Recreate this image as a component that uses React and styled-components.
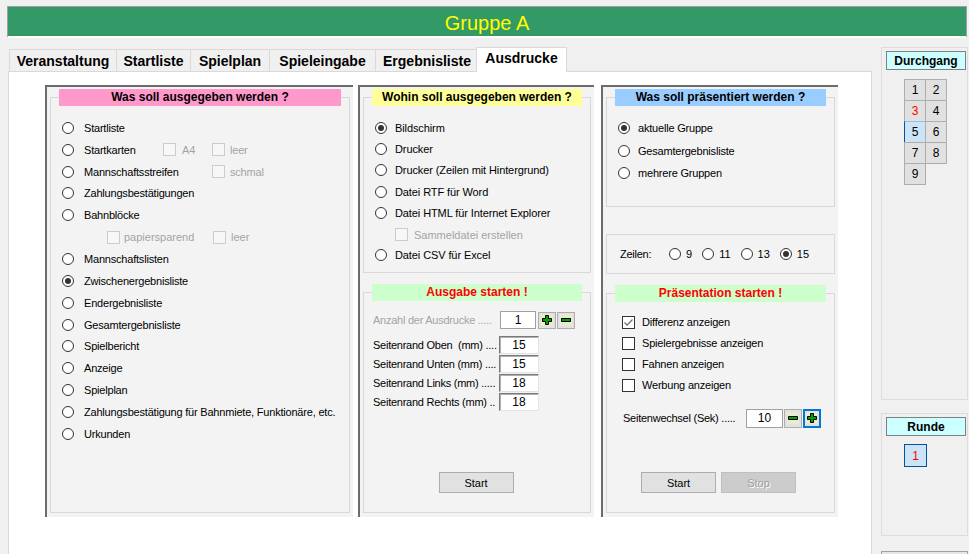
import React from "react";
import styled, { createGlobalStyle } from "styled-components";

const GlobalStyle = createGlobalStyle`
  html, body {
    margin: 0;
    padding: 0;
    background: #f0f0f0;
    overflow: hidden;
  }
  body {
    font-family: "Liberation Sans", Arial, sans-serif;
    color: #000;
  }
  * {
    box-sizing: border-box;
  }
`;

const Screen = styled.div`
  width: 969px;
  height: 554px;
  padding: 6px 0 0 7px;
  overflow: hidden;
`;

const TitleBar = styled.div`
  width: 960px;
  height: 32px;
  background: #339966;
  border: 1px solid #a0a0a0;
  border-bottom: 2px solid #fff;
  display: flex;
  align-items: center;
  justify-content: center;
  color: #ffff00;
  font-size: 20px;
  padding-top: 3px;
`;

const Body = styled.div`
  display: flex;
  align-items: flex-start;
  margin-top: 9px;
`;

const TabArea = styled.div`
  width: 865px;
`;

const TabStrip = styled.div`
  display: flex;
  align-items: flex-end;
  height: 24px;
  margin-left: 2px;
  position: relative;
  z-index: 1;
`;

const Tab = styled.div`
  width: ${(p) => p.$w}px;
  height: ${(p) => (p.$active ? 25 : 22)}px;
  margin: 0 0 ${(p) => (p.$active ? -1 : 0)}px
    ${(p) => (p.$active ? -3 : -1)}px;
  padding-bottom: ${(p) => (p.$active ? 4 : 0)}px;
  border: 1px solid #d9d9d9;
  border-bottom: none;
  background: ${(p) => (p.$active ? "#fff" : "#f0f0f0")};
  font-size: 14px;
  font-weight: bold;
  display: flex;
  align-items: center;
  justify-content: center;
  white-space: nowrap;
  position: relative;
  z-index: ${(p) => (p.$active ? 2 : 1)};
  &:first-child {
    margin-left: 0;
  }
`;

const Page = styled.div`
  margin-left: 1px;
  height: 490px;
  background: #fff;
  border: 1px solid #d9d9d9;
  padding: 13px 0 0 36px;
  display: flex;
  align-items: flex-start;
`;

const Panel = styled.div`
  width: ${(p) => p.$w}px;
  height: 432px;
  margin-right: ${(p) => p.$gap || 0}px;
  background: #f3f3f3;
  border-top: 2px solid #6b6b6b;
  border-left: 2px solid #6b6b6b;
  padding: 2px 3px 4px 3px;
  display: flex;
  flex-direction: column;
  font-size: 11px;
`;

const Group = styled.div`
  margin-top: ${(p) => p.$top}px;
  border: 1px solid #d8d8d8;
  display: flex;
  flex-direction: column;
  ${(p) => (p.$h ? `height: ${p.$h}px;` : "flex: 1;")}
`;

const GroupTitle = styled.div`
  margin: -9px 8px 0;
  height: 17px;
  line-height: 17px;
  background: ${(p) => p.$bg};
  color: ${(p) => p.$color || "#000"};
  font-size: 12px;
  font-weight: bold;
  text-align: center;
`;

const List = styled.div`
  display: flex;
  flex-direction: column;
  padding: ${(p) => p.$pad || "11px 0 0 11px"};
`;

const Row = styled.div`
  display: flex;
  align-items: center;
  height: ${(p) => p.$h}px;
  gap: ${(p) => p.$gap || 8}px;
  letter-spacing: ${(p) => p.$ls || 0}px;
  white-space: nowrap;
`;

const OptRow = styled.div`
  display: grid;
  grid-template-columns: 22px 79px 49px auto;
  align-items: center;
  height: ${(p) => p.$h}px;
  letter-spacing: -0.2px;
  white-space: nowrap;
`;

const SubRow = styled.div`
  display: grid;
  grid-template-columns: ${(p) => p.$cols};
  align-items: center;
  height: ${(p) => p.$h}px;
  padding-left: ${(p) => p.$indent}px;
  white-space: nowrap;
`;

const Span = styled.span`
  grid-column: ${(p) => p.$col};
`;

const RadioDot = styled.span`
  width: 12px;
  height: 12px;
  flex: none;
  border-radius: 50%;
  border: 1px solid #333;
  background: #fff;
  display: flex;
  align-items: center;
  justify-content: center;
  &::after {
    content: "";
    width: 6px;
    height: 6px;
    border-radius: 50%;
    background: ${(p) => (p.$on ? "#333" : "transparent")};
  }
`;

const Box = styled.span`
  width: 13px;
  height: 13px;
  flex: none;
  border: 1px solid ${(p) => (p.$off ? "#cccccc" : "#333")};
  background: ${(p) => (p.$off ? "#f7f7f7" : "#fff")};
  display: flex;
  align-items: center;
  justify-content: center;
`;

const CheckOpt = styled.span`
  display: flex;
  align-items: center;
  gap: ${(p) => p.$gap || 5}px;
  color: ${(p) => (p.$off ? "#a3a3a3" : "#000")};
`;

const FieldRow = styled.div`
  display: flex;
  align-items: center;
  height: ${(p) => p.$h}px;
  margin-top: ${(p) => p.$top || 0}px;
  white-space: nowrap;
`;

const FieldLabel = styled.span`
  width: ${(p) => p.$w}px;
  margin-left: ${(p) => p.$ml || 0}px;
  color: ${(p) => (p.$off ? "#a3a3a3" : "#000")};
  letter-spacing: -0.25px;
  white-space: pre;
  overflow: hidden;
  flex: none;
`;

const NumBox = styled.div`
  width: ${(p) => p.$w}px;
  height: ${(p) => p.$h || 18}px;
  background: #fff;
  border: 1px solid;
  border-color: ${(p) =>
    p.$flat ? "#a0a0a0" : "#7a7a7a #e3e3e3 #e3e3e3 #7a7a7a"};
  box-shadow: ${(p) => (p.$flat ? "none" : "inset 1px 1px 0 #b0b0b0")};
  display: flex;
  align-items: center;
  justify-content: center;
  font-size: 12px;
`;

const SpinBtn = styled.div`
  width: 18px;
  height: ${(p) => p.$h || 17}px;
  margin-left: ${(p) => p.$ml || 1}px;
  background: #e1e1e1;
  border: ${(p) => (p.$focus ? "2px solid #0078d7" : "1px solid #adadad")};
  display: flex;
  align-items: center;
  justify-content: center;
`;

const ButtonBar = styled.div`
  margin-top: auto;
  margin-bottom: 19px;
  display: flex;
  justify-content: center;
  gap: 5px;
  padding-right: ${(p) => p.$shift || 0}px;
`;

const Button = styled.div`
  width: 75px;
  height: 21px;
  background: ${(p) => (p.$off ? "#cccccc" : "#e1e1e1")};
  border: 1px solid ${(p) => (p.$off ? "#bfbfbf" : "#adadad")};
  color: ${(p) => (p.$off ? "#a0a0a0" : "#000")};
  text-shadow: ${(p) => (p.$off ? "1px 1px 0 #fff" : "none")};
  font-size: 11px;
  display: flex;
  align-items: center;
  justify-content: center;
`;

const Sidebar = styled.div`
  margin-left: 9px;
  width: 87px;
  display: flex;
  flex-direction: column;
`;

const SideGroup = styled.div`
  margin-top: ${(p) => p.$top || 0}px;
  height: ${(p) => p.$h}px;
  border: 1px solid #dcdcdc;
  padding: 3px 0 0 4px;
`;

const SideTitle = styled.div`
  width: 80px;
  height: 19px;
  border: 1px solid #808080;
  background: #ccffff;
  font-size: 12px;
  font-weight: bold;
  display: flex;
  align-items: center;
  justify-content: center;
`;

const PassGrid = styled.div`
  margin: 9px 0 0 18px;
  display: grid;
  grid-template-columns: 21px 21px;
  grid-auto-rows: 21px;
`;

const Cell = styled.div`
  margin: 0 -1px -1px 0;
  border: 1px solid #adadad;
  ${(p) => p.$sel && "border-left-color: #005499; border-top-color: #8fbde6;"}
  background: ${(p) => (p.$sel ? "#cce4f7" : "#e1e1e1")};
  color: ${(p) => (p.$red ? "#ff0000" : "#000")};
  font-size: 12px;
  display: flex;
  align-items: center;
  justify-content: center;
`;

const RoundBtn = styled.div`
  margin: 8px 0 0 18px;
  width: 23px;
  height: 23px;
  border: 1px solid #005499;
  background: #cce4f7;
  color: #ff0000;
  font-size: 12px;
  display: flex;
  align-items: center;
  justify-content: center;
`;

const StubBox = styled.div`
  margin-top: 15px;
  height: 20px;
  border: 1px solid #a0a0a0;
  background: #e6e6e6;
`;

const PlusIcon = () => (
  <svg width="12" height="12" viewBox="0 0 12 12">
    <rect width="12" height="12" fill="#ece9d2" />
    <path
      d="M4.5 1.5h3v3h3v3h-3v3h-3v-3h-3v-3h3z"
      fill="#00a000"
      stroke="#000"
      strokeWidth="1"
    />
  </svg>
);

const MinusIcon = () => (
  <svg width="12" height="12" viewBox="0 0 12 12">
    <rect width="12" height="12" fill="#ece9d2" />
    <path d="M1.5 4.5h9v3h-9z" fill="#00a000" stroke="#000" strokeWidth="1" />
  </svg>
);

const Tick = () => (
  <svg width="11" height="11" viewBox="0 0 11 11">
    <path d="M1.5 5.5l2.6 2.6L9.5 2.5" fill="none" stroke="#6e6e6e" strokeWidth="1.3" />
  </svg>
);

const Radio = ({ on, label, h, gap, ls }) => (
  <Row $h={h} $gap={gap} $ls={ls}>
    <RadioDot $on={on} />
    <span>{label}</span>
  </Row>
);

const Check = ({ on, off, label, gap }) => (
  <CheckOpt $off={off} $gap={gap}>
    <Box $off={off}>{on && <Tick />}</Box>
    {label}
  </CheckOpt>
);

const tabs = [
  ["Veranstaltung", 108],
  ["Startliste", 75],
  ["Spielplan", 80],
  ["Spieleingabe", 107],
  ["Ergebnisliste", 104],
  ["Ausdrucke", 91],
];

const LH = 21.85;

const leftTail = [
  "Mannschaftslisten",
  "Zwischenergebnisliste",
  "Endergebnisliste",
  "Gesamtergebnisliste",
  "Spielbericht",
  "Anzeige",
  "Spielplan",
  "Zahlungsbestätigung für Bahnmiete, Funktionäre, etc.",
  "Urkunden",
];

const margins = [
  ["Seitenrand Oben  (mm) ....", "15"],
  ["Seitenrand Unten (mm) ....", "15"],
  ["Seitenrand Links (mm) .....", "18"],
  ["Seitenrand Rechts (mm) ..", "18"],
];

const WhatPanel = () => (
  <Panel $w={308} $gap={5}>
    <Group $top={8}>
      <GroupTitle $bg="#ff99cc">Was soll ausgegeben werden ?</GroupTitle>
      <List>
        <Radio h={LH} gap={10} ls={-0.2} label="Startliste" />
        <OptRow $h={LH}>
          <RadioDot />
          <span>Startkarten</span>
          <Check off label="A4" gap={6} />
          <Check off label="leer" />
        </OptRow>
        <OptRow $h={LH}>
          <RadioDot />
          <Span $col="2 / 4">Mannschaftsstreifen</Span>
          <Check off label="schmal" />
        </OptRow>
        <Radio h={LH} gap={10} ls={-0.2} label="Zahlungsbestätigungen" />
        <Radio h={LH} gap={10} ls={-0.2} label="Bahnblöcke" />
        <SubRow $h={LH} $indent={45} $cols="106px auto">
          <Check off label="papiersparend" gap={4} />
          <Check off label="leer" />
        </SubRow>
        {leftTail.map((t) => (
          <Radio
            key={t}
            h={LH}
            gap={10}
            ls={-0.2}
            on={t === "Zwischenergebnisliste"}
            label={t}
          />
        ))}
      </List>
    </Group>
  </Panel>
);

const WherePanel = () => (
  <Panel $w={236} $gap={7}>
    <Group $top={8} $h={176}>
      <GroupTitle $bg="#ffff99">Wohin soll ausgegeben werden ?</GroupTitle>
      <List>
        <Radio h={21.4} ls={-0.1} on label="Bildschirm" />
        <Radio h={21.4} ls={-0.1} label="Drucker" />
        <Radio h={21.4} ls={-0.1} label="Drucker (Zeilen mit Hintergrund)" />
        <Radio h={21.4} ls={-0.1} label="Datei RTF für Word" />
        <Radio h={21.4} ls={-0.1} label="Datei HTML für Internet Explorer" />
        <SubRow $h={21.4} $indent={20} $cols="auto">
          <Check off label="Sammeldatei erstellen" gap={6} />
        </SubRow>
        <Radio h={20} ls={-0.1} label="Datei CSV für Excel" />
      </List>
    </Group>
    <Group $top={19}>
      <GroupTitle $bg="#ccffcc" $color="#ff0000">
        Ausgabe starten !
      </GroupTitle>
      <List $pad="10px 0 0 9px">
        <FieldRow $h={18}>
          <FieldLabel $w={127} $off>
            Anzahl der Ausdrucke .....
          </FieldLabel>
          <NumBox $w={36} $flat>
            1
          </NumBox>
          <SpinBtn $ml={2}>
            <PlusIcon />
          </SpinBtn>
          <SpinBtn>
            <MinusIcon />
          </SpinBtn>
        </FieldRow>
        {margins.map(([l, v], i) => (
          <FieldRow key={l} $h={19} $top={i === 0 ? 6 : 0}>
            <FieldLabel $w={126}>{l}</FieldLabel>
            <NumBox $w={40}>{v}</NumBox>
          </FieldRow>
        ))}
      </List>
      <ButtonBar $shift={2}>
        <Button>Start</Button>
      </ButtonBar>
    </Group>
  </Panel>
);

const ShowPanel = () => (
  <Panel $w={237}>
    <Group $top={8} $h={110}>
      <GroupTitle $bg="#99ccff">Was soll präsentiert werden ?</GroupTitle>
      <List>
        <Radio h={22.5} ls={-0.2} on label="aktuelle Gruppe" />
        <Radio h={22.5} ls={-0.2} label="Gesamtergebnisliste" />
        <Radio h={22.5} ls={-0.2} label="mehrere Gruppen" />
      </List>
    </Group>
    <Group $top={27} $h={40}>
      <List $pad="0 0 0 13px">
        <Row $h={38} $gap={10}>
          <FieldLabel $w={39}>Zeilen:</FieldLabel>
          {["9", "11", "13", "15"].map((n) => (
            <Row key={n} $h={38} $gap={5}>
              <RadioDot $on={n === "15"} />
              <span>{n}</span>
            </Row>
          ))}
        </Row>
      </List>
    </Group>
    <Group $top={19}>
      <GroupTitle $bg="#ccffcc" $color="#ff0000">
        Präsentation starten !
      </GroupTitle>
      <List $pad="9.5px 0 0 15px">
        {[
          ["Differenz anzeigen", true],
          ["Spielergebnisse anzeigen", false],
          ["Fahnen anzeigen", false],
          ["Werbung anzeigen", false],
        ].map(([t, on]) => (
          <Row key={t} $h={21} $ls={-0.2}>
            <Check on={on} label={t} gap={7} />
          </Row>
        ))}
        <FieldRow $h={19} $top={13}>
          <FieldLabel $w={123} $ml={1}>
            Seitenwechsel (Sek) .....
          </FieldLabel>
          <NumBox $w={37} $h={19} $flat>
            10
          </NumBox>
          <SpinBtn $h={19}>
            <MinusIcon />
          </SpinBtn>
          <SpinBtn $h={19} $focus>
            <PlusIcon />
          </SpinBtn>
        </FieldRow>
      </List>
      <ButtonBar $shift={4}>
        <Button>Start</Button>
        <Button $off>Stop</Button>
      </ButtonBar>
    </Group>
  </Panel>
);

export default function App() {
  return (
    <Screen>
      <GlobalStyle />
      <TitleBar>Gruppe A</TitleBar>
      <Body>
        <TabArea>
          <TabStrip>
            {tabs.map(([t, w]) => (
              <Tab key={t} $w={w} $active={t === "Ausdrucke"}>
                {t}
              </Tab>
            ))}
          </TabStrip>
          <Page>
            <WhatPanel />
            <WherePanel />
            <ShowPanel />
          </Page>
        </TabArea>
        <Sidebar>
          <SideGroup $h={353}>
            <SideTitle>Durchgang</SideTitle>
            <PassGrid>
              {[1, 2, 3, 4, 5, 6, 7, 8, 9].map((n) => (
                <Cell key={n} $red={n === 3} $sel={n === 5}>
                  {n}
                </Cell>
              ))}
            </PassGrid>
          </SideGroup>
          <SideGroup $top={13} $h={123}>
            <SideTitle>Runde</SideTitle>
            <RoundBtn>1</RoundBtn>
          </SideGroup>
          <StubBox />
        </Sidebar>
      </Body>
    </Screen>
  );
}
